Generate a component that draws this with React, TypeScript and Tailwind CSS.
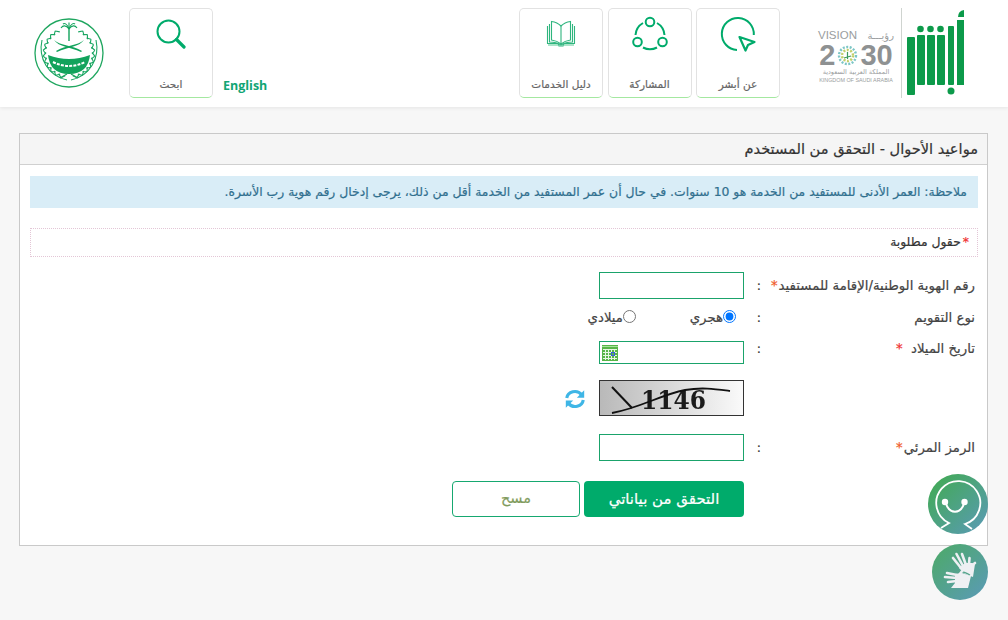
import React from "react";

const G = "#00ab6b";

function AbsherLogo() {
  return (
    <svg width="66" height="90" viewBox="900 8 66 90" aria-hidden="true">
      <rect x="901" y="8" width="1" height="90" fill="#cfd4d0" />
      <g fill="#0c9a4a">
        <rect x="907" y="37" width="8" height="58" rx="1" />
        <rect x="917" y="35" width="8" height="50" rx="1" />
        <rect x="927" y="35" width="8" height="50" rx="1" />
        <rect x="937" y="35" width="8" height="50" rx="1" />
        <rect x="948" y="26" width="6" height="59" rx="1" />
        <rect x="957" y="20" width="7" height="65" />
        <circle cx="920.5" cy="29" r="3.3" />
        <circle cx="930.5" cy="29" r="3.3" />
        <circle cx="940.5" cy="29" r="3.3" />
        <circle cx="951" cy="91" r="3.5" />
        <path d="M958 17 Q958 11 964 10 L964 17 Z" />
      </g>
    </svg>
  );
}

function Vision() {
  return (
    <div dir="ltr" className="flex w-[76px] flex-col items-center text-[#9a9d9e] [-webkit-text-stroke:0] [font-family:'Liberation_Sans',sans-serif]">
      <div className="flex h-[13px] w-full items-center justify-between text-[11.5px] leading-[13px]">
        <span>VISION</span>
        <span className="text-[10px] [font-family:'DejaVu_Sans',sans-serif]">رؤيـــة</span>
      </div>
      <div className="mt-[2px] flex h-[23px] items-center gap-[2px] text-[29px] font-bold leading-[23px] text-[#8e9192]">
        <span>2</span>
        <svg width="21" height="21" viewBox="0 0 21 21" aria-hidden="true">
          <g fill="none" strokeWidth="2.4" strokeDasharray="2 1.5">
            <circle cx="10.5" cy="10.5" r="8.5" stroke="#7cc6c6" />
            <circle cx="10.5" cy="10.5" r="5.5" stroke="#c2cf6a" />
          </g>
          <path d="M10.5 7v7M7 13l7-2" stroke="#3b9a5a" strokeWidth="1.2" />
        </svg>
        <span>30</span>
      </div>
      <div className="mt-[1px] h-[8px] text-[6.5px] leading-[8px] [font-family:'DejaVu_Sans',sans-serif]">المملكة العربية السعودية</div>
      <div className="mt-[1px] whitespace-nowrap text-[5.4px] leading-[6px]">KINGDOM OF SAUDI ARABIA</div>
    </div>
  );
}

function Emblem() {
  const nodes = Array.from({ length: 11 }, (_, i) => 18 + i * 13);
  return (
    <svg width="70" height="70" viewBox="0 0 70 70" aria-hidden="true">
      <circle cx="35" cy="35" r="34" fill="#fff" stroke="#1fa65f" strokeWidth="1.3" />
      {[1, -1].map((side) =>
        nodes.map((deg) => {
          const t = (deg * Math.PI) / 180;
          const x = 35 + side * 26 * Math.sin(t);
          const y = 35 + 26 * Math.cos(t);
          const tangent = side * -deg;
          return (
            <g key={`${side}-${deg}`} transform={`translate(${x.toFixed(2)} ${y.toFixed(2)}) rotate(${tangent})`}>
              <path d="M0 0 L-3.4 -3.2 M0 0 L3.4 -3.2" stroke="#1aa662" strokeWidth="1.1" fill="none" />
            </g>
          );
        }),
      )}
      <g fill="none" stroke="#1aa662" strokeWidth="1.1">
        <path d="M8 22 C4 40 14 58 33 62" />
        <path d="M62 22 C66 40 56 58 37 62" />
      </g>
      <g fill="none" stroke="#12a35c" strokeWidth="1.1">
        <path d="M35 11 C32 7 29 7 27 10" />
        <path d="M35 11 C33 5 30 5 29 6" />
        <path d="M35 11 C35 7 35 6 35 4.5" />
        <path d="M35 11 C37 5 40 5 41 6" />
        <path d="M35 11 C38 7 41 7 43 10" />
      </g>
      <rect x="34.3" y="10" width="1.4" height="13" fill="#12a35c" />
      <g fill="#12a35c">
        <path d="M20 22 C25 29 36 29 47 34 L48 33 C38 27 27 28 20 22z" />
        <path d="M50 22 C45 29 34 29 23 34 L22 33 C32 27 43 28 50 22z" />
        <path d="M14 37 Q35 45 56 37 Q54 56 35 56 Q16 56 14 37z" />
      </g>
      <path d="M19 44 Q35 52 51 44" fill="none" stroke="#fff" strokeWidth="2" strokeDasharray="3 1.2" />
      <path d="M26 60 L33 56 M44 60 L37 56" stroke="#1fa65f" strokeWidth="1.4" />
    </svg>
  );
}

function IconAbout() {
  return (
    <svg width="36" height="36" viewBox="0 0 36 36" fill="none" stroke={G} strokeWidth="2" strokeLinejoin="round" aria-hidden="true">
      <path d="M17 34A16 16 0 1 1 33.8 19" />
      <path d="M19.5 21 L34.5 26 L28 29 L25.5 34.5 Z" strokeWidth="2.2" />
    </svg>
  );
}

function IconShare() {
  return (
    <svg width="36" height="36" viewBox="0 0 36 36" fill="none" stroke={G} strokeWidth="2" aria-hidden="true">
      <circle cx="18" cy="6" r="4.3" />
      <circle cx="5.5" cy="26" r="4.3" />
      <circle cx="30.5" cy="26" r="4.3" />
      <path d="M11 7 A15 15 0 0 0 3.5 19" />
      <path d="M25 7 A15 15 0 0 1 32.5 19" />
      <path d="M11 31.5 A15 15 0 0 0 25 31.5" />
    </svg>
  );
}

function IconBook() {
  return (
    <svg width="30" height="28" viewBox="0 0 30 28" fill="none" stroke="#2fb57e" strokeWidth="1.1" aria-hidden="true">
      <path d="M15 6 C12 3 9 2 5.5 1.5 V20 C9 20.5 12 21.5 15 24 C18 21.5 21 20.5 24.5 20 V1.5 C21 2 18 3 15 6 Z" />
      <path d="M15 6 V24" />
      <path d="M3.5 4 V22 C8 22 12 23 15 25 C18 23 22 22 26.5 22 V4" />
      <path d="M1.5 6 V23.5 H11 C12.5 24 13 25 13 26 H17 C17 25 17.5 24 19 23.5 H28.5 V6" />
      <path d="M2 25 H12 M18 25 H28" stroke="#8fdcb8" strokeWidth="1.5" />
    </svg>
  );
}

function IconSearch() {
  return (
    <svg width="30" height="30" viewBox="0 0 30 30" fill="none" stroke={G} aria-hidden="true">
      <circle cx="12.5" cy="12.5" r="11" strokeWidth="2" />
      <path d="M20.5 20.5 L28 28" strokeWidth="3.2" strokeLinecap="round" />
    </svg>
  );
}

function NavCard({ label, icon }: { label: string; icon: React.ReactNode }) {
  return (
    <div className="flex h-[90px] w-[84px] flex-col items-center rounded-[5px] border border-[#e2e2e2] border-b-[#a4e8a0] bg-white">
      <div className="flex h-[50px] w-full items-center justify-center">{icon}</div>
      <div className="mt-[18px] text-[10.5px] leading-[14px] text-[#666]">{label}</div>
    </div>
  );
}

function Star() {
  return <span className="mr-[1px] text-[#f05a28]">*</span>;
}

function Label({ children }: { children: React.ReactNode }) {
  return <div className="w-[214px] whitespace-nowrap pr-[3px] text-[13.3px] leading-[16px] text-[#444]">{children}</div>;
}

function Colon() {
  return <div className="w-[20px] pr-[3px] text-[12.5px] leading-[16px] text-[#333]">:</div>;
}

function TextBox({ h = "h-[27px]", children }: { h?: string; children?: React.ReactNode }) {
  return <div className={`flex ${h} w-[145px] items-center border border-[#1aa36b] bg-white`} dir="ltr">{children}</div>;
}

function CalendarIcon() {
  return (
    <svg width="16" height="16" viewBox="0 0 16 16" className="ml-[2px]" aria-hidden="true">
      <rect width="16" height="16" fill="#58b548" />
      <rect x="0" y="1" width="16" height="1" fill="#a9e29c" />
      <path d="M1 4.5h14M1 7.5h14M1 10.5h14M1 13.5h14M3.5 4v11M6.5 4v11M9.5 4v11M12.5 4v11" stroke="#e8f7e3" strokeWidth="1" />
      <rect x="9.5" y="7.5" width="3" height="3" fill="none" stroke="#3a62d8" strokeWidth="1" />
    </svg>
  );
}

function Captcha() {
  return (
    <div className="h-[36px] w-[145px] border border-[#333] bg-gradient-to-r from-[#b9b9b9] to-[#fafafa]" dir="ltr">
      <svg width="143" height="34" viewBox="0 0 143 34" className="blur-[0.4px]" aria-hidden="true">
        <text x="41" y="28" fontFamily="'DejaVu Serif', serif" fontWeight="700" fontSize="26" fill="#1b1b1b" textLength="65" lengthAdjust="spacingAndGlyphs">1146</text>
        <path d="M12 6 L32 27" stroke="#111" strokeWidth="2" fill="none" />
        <path d="M12 32 C40 27 60 14 85 9 C102 6 115 8 130 10" stroke="#111" strokeWidth="1.8" fill="none" />
      </svg>
    </div>
  );
}

function RefreshIcon() {
  return (
    <svg width="22" height="22" viewBox="0 0 24 24" fill="none" stroke="#3fb6e6" strokeWidth="3.4" aria-hidden="true">
      <path d="M3 11 C4 4 14 1 19.5 7.5" />
      <path d="M22 2.5 V10.5 H14 Z" fill="#3fb6e6" stroke="none" />
      <path d="M21 13 C20 20 10 23 4.5 16.5" />
      <path d="M2 21.5 V13.5 H10 Z" fill="#3fb6e6" stroke="none" />
    </svg>
  );
}

function Bot() {
  return (
    <svg width="60" height="60" viewBox="0 0 60 60" aria-hidden="true">
      <defs>
        <linearGradient id="bg1" x1="0" y1="0" x2="1" y2="1">
          <stop offset="0" stopColor="#40ab4e" />
          <stop offset="1" stopColor="#5b9ab8" />
        </linearGradient>
      </defs>
      <circle cx="30" cy="30" r="30" fill="url(#bg1)" />
      <path d="M13 54 L21 49 A22 22 0 1 1 37 50 L44 55" fill="none" stroke="#fff" strokeWidth="1.8" />
      <path d="M17.5 28 C21 41 33 41 36.5 28" fill="none" stroke="#fff" strokeWidth="2" />
      <circle cx="17" cy="28" r="3.2" fill="#fff" />
      <circle cx="36.5" cy="28" r="3.2" fill="#fff" />
    </svg>
  );
}

function Hands() {
  return (
    <svg width="56" height="56" viewBox="0 0 56 56" aria-hidden="true">
      <defs>
        <linearGradient id="bg2" x1="0" y1="0" x2="1" y2="1">
          <stop offset="0" stopColor="#4caa66" />
          <stop offset="1" stopColor="#5b9ab8" />
        </linearGradient>
      </defs>
      <circle cx="28" cy="28" r="28" fill="url(#bg2)" />
      <g stroke="#eef0f3" strokeLinecap="round" fill="none" strokeWidth="2.6">
        <path d="M29 24 L21 14" />
        <path d="M31 22 L24.5 10" />
        <path d="M34 21 L30 10" />
        <path d="M37 20 L37.5 14" />
        <path d="M38 23 L43 19" />
      </g>
      <path d="M27 24 L33 19 L40 19 L43 20 L41 33 L33 30 Z" fill="#eef0f3" />
      <path d="M22 29 C27 26 31 27 38 31" fill="none" stroke="#55a58b" strokeWidth="1.2" />
      <g stroke="#eef0f3" strokeLinecap="round" fill="none" strokeWidth="2.6">
        <path d="M25 34 L13 33" />
        <path d="M25 31 L15 29" />
        <path d="M25 37 L16 38" />
        <path d="M27 31 L31 26" />
      </g>
      <path d="M23 30 L30 29 L39 32 L36 44 L19 44 L23 39 Z" fill="#eef0f3" />
    </svg>
  );
}

export default function App() {
  return (
    <div dir="rtl" className="relative h-[620px] w-[1008px] overflow-hidden bg-[#f7f7f7] [-webkit-text-stroke:0.2px] [font-family:'DejaVu_Sans',sans-serif]">
      <header className="flex h-[107px] items-start justify-between bg-white pr-[42px] pl-[34px] pt-[8px] shadow-[0_1px_4px_rgba(0,0,0,0.08)]">
        <div className="flex items-start">
          <AbsherLogo />
          <div className="mr-[6px] mt-[21px]"><Vision /></div>
          <div className="mr-[38px] flex gap-[4.5px]">
            <NavCard label="عن أبشر" icon={<IconAbout />} />
            <NavCard label="المشاركة" icon={<IconShare />} />
            <NavCard label="دليل الخدمات" icon={<IconBook />} />
          </div>
        </div>
        <div className="flex items-start">
          <span dir="ltr" className="mt-[69px] text-[12.5px] font-bold leading-[18px] text-[#12a574] [-webkit-text-stroke:0] [font-family:'Open_Sans',sans-serif]">English</span>
          <div className="mr-[10px]"><NavCard label="ابحث" icon={<IconSearch />} /></div>
          <div className="mr-[25px] mt-[10px]"><Emblem /></div>
        </div>
      </header>

      <main className="mr-[20px] ml-[19px] mt-[26px] h-[413px] border border-[#c9c9c9] bg-white">
        <div className="flex h-[31px] items-center border-b border-[#d0d0d0] bg-[#f5f5f5] pr-[9px] text-[14.6px] leading-[20px] text-[#333]">
          مواعيد الأحوال - التحقق من المستخدم
        </div>
        <div className="pr-[9px] pl-[10px] pt-[11px]">
          <div className="flex h-[32px] items-center bg-[#d9edf7] pr-[11px] text-[12.4px] text-[#31708f]">
            ملاحظة: العمر الأدنى للمستفيد من الخدمة هو 10 سنوات. في حال أن عمر المستفيد من الخدمة أقل من ذلك، يرجى إدخال رقم هوية رب الأسرة.
          </div>
          <div className="mt-[20px] flex h-[29px] items-center border border-dotted border-[#e3c6d6] pr-[8px] text-[12.4px] text-[#333]">
            <span className="ml-[2px] text-[#f03030]">*</span>حقول مطلوبة
          </div>

          <div className="mt-[15px] flex h-[27px] items-center">
            <Label>رقم الهوية الوطنية/الإقامة للمستفيد<Star /></Label>
            <Colon />
            <TextBox />
          </div>
          <div className="mt-[9px] flex h-[20px] items-center">
            <Label>نوع التقويم</Label>
            <Colon />
            <div className="flex text-[13.3px] text-[#444]">
              <label className="flex w-[100px] items-start pr-[8px]">
                <input type="radio" name="cal" defaultChecked className="m-0 h-[13px] w-[13px]" />
                <span className="leading-[16px]">هجري</span>
              </label>
              <label className="flex w-[100px] items-start pr-[8px]">
                <input type="radio" name="cal" className="m-0 h-[13px] w-[13px]" />
                <span className="leading-[16px]">ميلادي</span>
              </label>
            </div>
          </div>
          <div className="mt-[13px] flex h-[23px] items-start">
            <Label>تاريخ الميلاد <span className="text-[#f03030]">&nbsp;*</span></Label>
            <Colon />
            <TextBox h="h-[23px]"><CalendarIcon /></TextBox>
          </div>
          <div className="mt-[16px] flex h-[36px] items-center">
            <div className="w-[234px]" />
            <Captcha />
            <div className="mr-[13px] mt-[2px]"><RefreshIcon /></div>
          </div>
          <div className="mt-[18px] flex h-[27px] items-center">
            <Label>الرمز المرئي<Star /></Label>
            <Colon />
            <TextBox />
          </div>
          <div className="mt-[20px] flex gap-[4px] pr-[234px]">
            <button className="h-[36px] w-[160px] rounded-[4px] bg-[#00ab6b] text-[15px] text-white">التحقق من بياناتي</button>
            <button className="h-[36px] w-[128px] rounded-[4px] border border-[#16a870] bg-white text-[14.5px] text-[#7f9b5c]">مسح</button>
          </div>
        </div>
      </main>

      <div className="absolute left-[928px] top-[474px]"><Bot /></div>
      <div className="absolute left-[932px] top-[544px]"><Hands /></div>
    </div>
  );
}
